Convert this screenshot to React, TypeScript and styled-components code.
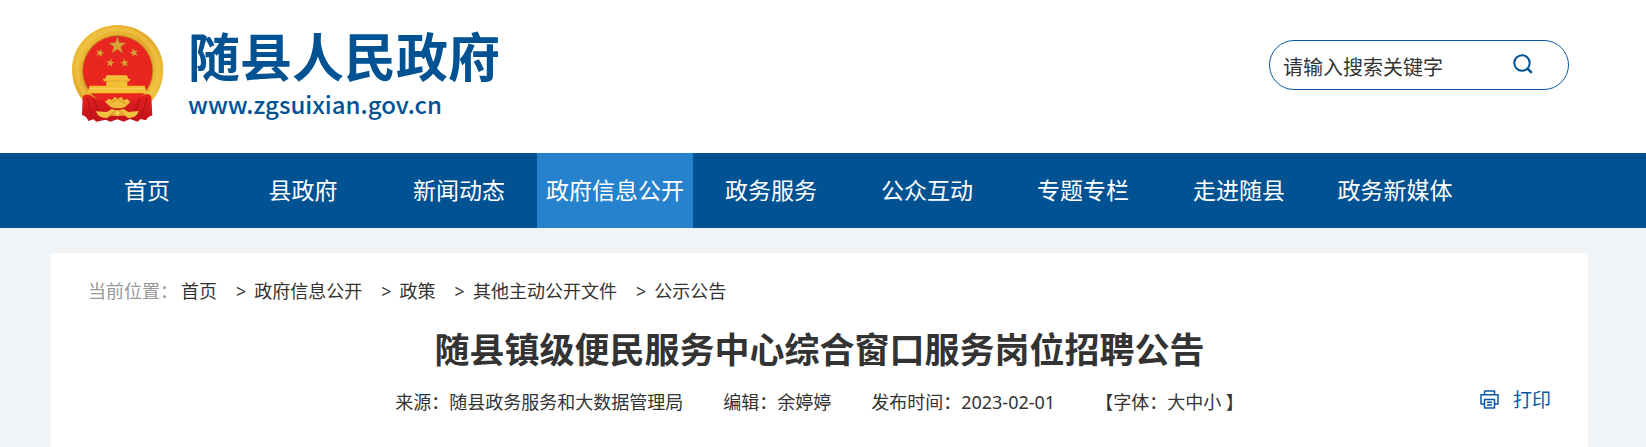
import React from 'react';
import styled, { createGlobalStyle } from 'styled-components';

const blue = '#015293';
const sans = '"Noto Sans", "Noto Sans CJK SC", sans-serif';

const GlobalStyle = createGlobalStyle`
  * { box-sizing: border-box; }
  body {
    margin: 0;
    min-height: 100vh;
    background: #f0f4f7;
    color: #333;
    font-family: ${sans};
    font-size: 18px;
    line-height: 24px;
  }
  a { color: inherit; text-decoration: none; }
  button {
    padding: 0;
    border: 0;
    background: none;
    color: inherit;
    font: inherit;
    cursor: pointer;
  }
`;

const Banner = styled.header`
  padding: 0 77px 0 72px;
  background: #fff;
`;

const BannerInner = styled.div`
  display: flex;
  justify-content: space-between;
  align-items: flex-start;
  min-height: 153px;
`;

const Brand = styled.a`
  display: flex;
  gap: 24px;
  padding-top: 24px;
  color: ${blue};
`;

const BrandText = styled.div`
  display: flex;
  flex-direction: column;
  font-family: "Noto Sans CJK SC", sans-serif;
`;

const BrandName = styled.span`
  font-size: 52px;
  line-height: 62px;
  font-weight: 700;
`;

const BrandUrl = styled.span`
  font-size: 24px;
  line-height: 36px;
  font-weight: 500;
`;

const SearchForm = styled.form`
  display: flex;
  align-items: center;
  width: 300px;
  height: 50px;
  margin-top: 40px;
  padding: 0 35px 0 13px;
  border: 1px solid #0858a6;
  border-radius: 25px;
`;

const SearchInput = styled.input`
  flex: 1;
  min-width: 0;
  padding: 6px 0 0;
  border: 0;
  outline: 0;
  background: none;
  font-family: ${sans};
  font-size: 20px;
  line-height: 28px;
  color: #333;
  &::placeholder { color: #333; opacity: 1; }
`;

const SearchButton = styled.button`
  display: flex;
  padding-bottom: 2px;
  color: ${blue};
`;

const Nav = styled.nav`
  padding: 0 74px 0 69px;
  background: ${blue};
`;

const NavList = styled.ul`
  display: flex;
  margin: 0;
  padding: 0;
  list-style: none;
`;

const NavLink = styled.a<{ $active?: boolean }>`
  display: block;
  width: 156px;
  background: ${(p) => (p.$active ? '#2782cd' : 'transparent')};
  color: #fff;
  font-size: 23px;
  line-height: 75px;
  text-align: center;
  white-space: nowrap;
`;

const Main = styled.main`
  padding: 25px 58px 0 51px;
`;

const Article = styled.article`
  padding: 26px 37px 33px;
  background: #fff;
`;

const Crumbs = styled.nav`
  display: flex;
  white-space: nowrap;
`;

const CrumbLabel = styled.span`
  color: #999;
`;

const CrumbList = styled.ol`
  display: flex;
  margin: 0;
  padding: 0 0 0 3px;
  list-style: none;
  li + li::before {
    content: ">";
    margin: 0 8px 0 19px;
  }
`;

const Title = styled.h1`
  margin: 23px 0 16px;
  font-size: 35px;
  line-height: 48px;
  font-weight: 700;
  text-align: center;
`;

const InfoRow = styled.div`
  display: grid;
  grid-template-columns: 1fr auto 1fr;
  align-items: start;
`;

const Meta = styled.div`
  display: flex;
  grid-column: 2;
  gap: 40px;
  white-space: nowrap;
`;

const PrintButton = styled.button`
  display: flex;
  justify-self: end;
  align-items: center;
  gap: 14px;
  color: #0858a6;
  font-size: 19px;
  line-height: 18px;
`;

const navItems = ['首页', '县政府', '新闻动态', '政府信息公开', '政务服务', '公众互动', '专题专栏', '走进随县', '政务新媒体'];
const crumbs = ['首页', '政府信息公开', '政策', '其他主动公开文件', '公示公告'];

const starPath = 'M0-10 2.4-3.2 9.5-3.1 3.8 1.2 5.9 8.1 0 4-5.9 8.1-3.8 1.2-9.5-3.1-2.4-3.2Z';

const Emblem = () => (
  <svg width="92" height="98" viewBox="38 25 276 294" role="img" aria-label="国徽">
    <defs>
      <linearGradient id="gold" x1="0" y1="0" x2="1" y2="1">
        <stop offset="0" stopColor="#f2c43c" />
        <stop offset="0.5" stopColor="#e2a92c" />
        <stop offset="1" stopColor="#f0c540" />
      </linearGradient>
      <linearGradient id="drape" x1="0" y1="0" x2="0" y2="1">
        <stop offset="0" stopColor="#e3231f" />
        <stop offset="1" stopColor="#c3101a" />
      </linearGradient>
    </defs>
    <path d="M175 28C252 28 312 89 312 160C312 206 294 240 272 262L78 262C56 240 38 206 38 160C38 89 98 28 175 28Z" fill="url(#gold)" />
    <circle cx="175" cy="163" r="122" fill="none" stroke="#f3cc4e" strokeWidth="12" opacity="0.45" />
    <circle cx="175" cy="165" r="107" fill="#c98a25" />
    <circle cx="175" cy="165" r="104" fill="#e8261f" />
    <g fill="#d9a437" stroke="#a8741c" strokeWidth="0.4">
      <path d={starPath} transform="translate(174 90) scale(2.7)" />
      <path d={starPath} transform="translate(122 112) rotate(15) scale(1.35)" />
      <path d={starPath} transform="translate(224 111) rotate(-15) scale(1.35)" />
      <path d={starPath} transform="translate(153 142) rotate(10) scale(1.35)" />
      <path d={starPath} transform="translate(196 142) rotate(-10) scale(1.35)" />
    </g>
    <path d="M142 179H203L207 189H214L210 197H204V210H256L263 233H83L91 210H141V197H134L130 189H138Z" fill="#f3bf35" />
    <path d="M137 196H207" stroke="#dc9c2a" strokeWidth="2" />
    <path d="M92 219H256" stroke="#f8d664" strokeWidth="3" />
    <path d="M70 243C78 232 92 236 105 246L145 262H202L245 242C258 234 270 232 276 243L279 299C269 303 264 306 260 314L244 310L235 318L212 310L193 318L174 311L153 318L139 312L111 318L103 311L87 316C83 306 78 300 68 298Z" fill="url(#drape)" />
    <path d="M84 246L98 305M102 249L125 300M263 244L247 304M242 249L222 298" stroke="#b01019" strokeWidth="3" fill="none" />
    <path d="M137 258L149 249L158 254L165 244L175 249L186 244L193 254L203 249L213 259L197 274C184 279 165 279 153 273Z" fill="#efbd37" />
    <path d="M152 264L175 250L198 264" stroke="#d29328" strokeWidth="3" fill="none" />
    <path d="M110 287L142 289L158 280L174 285L192 280L207 289L238 286C233 301 222 307 207 307L191 296L174 302L157 297L143 307C124 307 114 300 110 287Z" fill="#f2c33c" />
    <path d="M147 300C157 280 191 280 201 300Z" fill="#e6a62e" />
    <circle cx="174" cy="292" r="8" fill="#f7d458" stroke="#d29328" strokeWidth="2" />
  </svg>
);

const SearchIcon = () => (
  <svg width="20" height="20" viewBox="0 0 20 20" fill="none" stroke="currentColor" strokeWidth="2" aria-hidden="true">
    <circle cx="9" cy="9" r="7.7" />
    <path d="M14.3 14.3L18.8 18.8" strokeWidth="2.4" />
  </svg>
);

const PrintIcon = () => (
  <svg width="19" height="19" viewBox="0 0 19 19" fill="none" stroke="currentColor" strokeWidth="1.5" strokeLinejoin="round" aria-hidden="true">
    <path d="M4.5 4.5V1H14.5V4.5" />
    <path d="M4.5 14H1V4.7H18V14H14.5" />
    <path d="M4.5 9.5H14.5V18H4.5Z" />
    <path d="M7 12.3H12M7 15H12" />
  </svg>
);

export default function App() {
  return (
    <>
      <GlobalStyle />
      <Banner>
        <BannerInner>
          <Brand href="#">
            <Emblem />
            <BrandText>
              <BrandName>随县人民政府</BrandName>
              <BrandUrl>www.zgsuixian.gov.cn</BrandUrl>
            </BrandText>
          </Brand>
          <SearchForm role="search" onSubmit={(e) => e.preventDefault()}>
            <SearchInput type="text" placeholder="请输入搜索关键字" aria-label="请输入搜索关键字" />
            <SearchButton type="submit" aria-label="搜索">
              <SearchIcon />
            </SearchButton>
          </SearchForm>
        </BannerInner>
      </Banner>
      <Nav>
        <NavList>
          {navItems.map((item) => (
            <li key={item}>
              <NavLink href="#" $active={item === '政府信息公开'}>{item}</NavLink>
            </li>
          ))}
        </NavList>
      </Nav>
      <Main>
        <Article>
          <Crumbs>
            <CrumbLabel>当前位置：</CrumbLabel>
            <CrumbList>
              {crumbs.map((item) => (
                <li key={item}><a href="#">{item}</a></li>
              ))}
            </CrumbList>
          </Crumbs>
          <Title>随县镇级便民服务中心综合窗口服务岗位招聘公告</Title>
          <InfoRow>
            <Meta>
              <span>来源：随县政务服务和大数据管理局</span>
              <span>编辑：余婷婷</span>
              <span>发布时间：<time dateTime="2023-02-01">2023-02-01</time></span>
              <span>
                【字体：<button type="button">大</button><button type="button">中</button><button type="button">小</button> 】
              </span>
            </Meta>
            <PrintButton type="button" onClick={() => window.print()}>
              <PrintIcon />
              打印
            </PrintButton>
          </InfoRow>
        </Article>
      </Main>
    </>
  );
}
